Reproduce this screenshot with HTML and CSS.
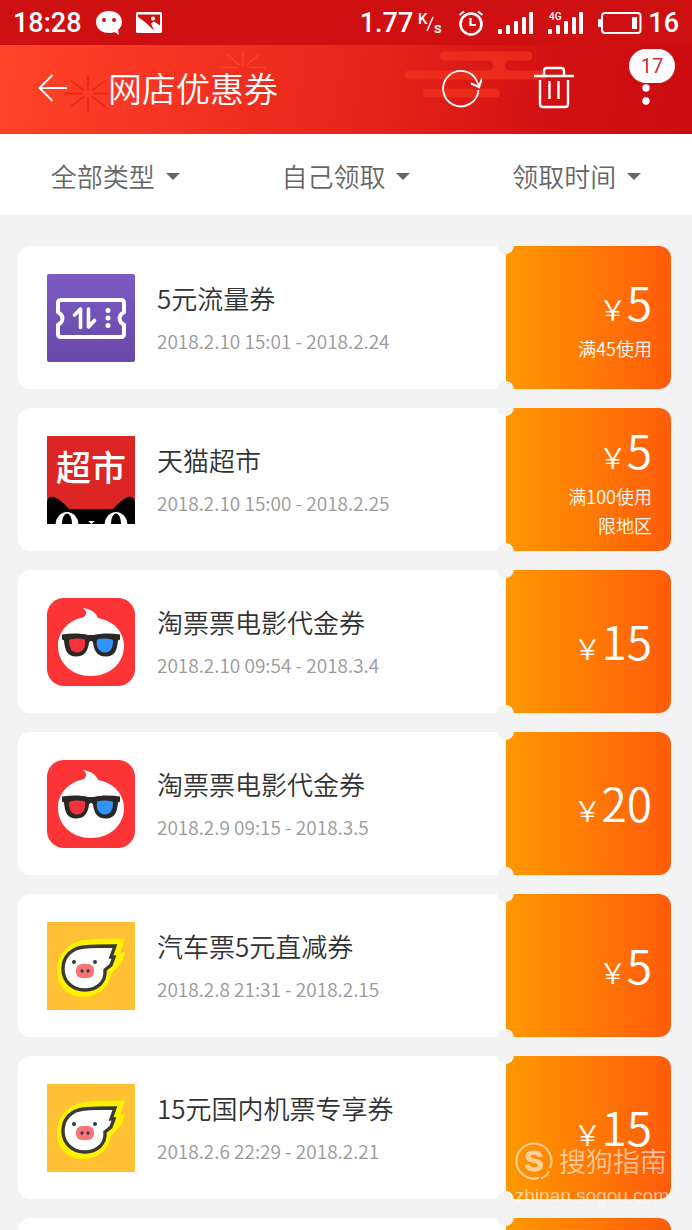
FILE: index.html
```html
<!DOCTYPE html>
<html lang="zh-CN">
<head>
  <meta charset="UTF-8" />
  <meta name="viewport" content="width=device-width, initial-scale=1.0" />
  <title>网店优惠券</title>
  <link rel="stylesheet" href="styles.css">
</head>
<body>
  <!-- shared logos -->
  <svg class="sprite" aria-hidden="true">
    <symbol id="logo-movie" viewBox="0 0 88 88">
      <rect width="88" height="88" rx="17" fill="#fd3436"/>
      <path d="M36 10c7 1 13 4 15 10 16 3 26 14 26 28 0 17-14 30-33 30S11 65 11 48c0-15 11-26 26-29 3-3 3-6-1-9z" fill="#fff"/>
      <path d="M15 36.500c9-1.500 19-1.500 26 .5h6c7-2 17-2 26-.5v5l-2 1c-1 11-4 16-12 16-9 0-12-6-13-14-1-2-3-2-4 0-1 8-4 14-13 14-8 0-11-5-12-16l-2-1z" fill="#2a2725"/>
      <path d="M22 42c5-2 11-2 16-.5 1 6-1 13-8 13-6 0-8-5-8-12.500z" fill="#f5323b"/>
      <path d="M66 42c-5-2-11-2-16-.5-1 6 1 13 8 13 6 0 8-5 8-12.500z" fill="#3193fb"/>
    </symbol>
    <symbol id="logo-pig" viewBox="0 0 88 88">
      <rect width="88" height="88" fill="#ffc033"/>
      <path d="M78 16.500L73 31l5-1-3 10-11 12c-2 14-14 23-28 23C20 75 10 64 10 49c0-15 9-26 23-30 11-3 29-2 45-2.500z" fill="#fff200"/>
      <path d="M68 24l-4 11h3l-3 8-6 5c1 12-8 20-20 20-13 0-22-9-22-21 0-13 9-21 21-22 11-1 21-1 31-1z" fill="#fff" stroke="#3a3935" stroke-width="3.400"/>
      <rect x="29" y="42" width="18" height="14" rx="6" fill="#fb7377"/>
      <circle cx="27" cy="40" r="2" fill="#3a3935"/>
      <circle cx="48" cy="40" r="2" fill="#3a3935"/>
      <circle cx="35" cy="49" r="1.700" fill="#3a3935"/>
      <circle cx="41" cy="49" r="1.700" fill="#3a3935"/>
    </symbol>
  </svg>

  <div class="app">
    <div class="status-bar">
      <div class="status-group">
        <span>18:28</span>
        <svg width="26" height="24" viewBox="0 0 26 24">
          <path d="M13 0C5.500 0 0 4.600 0 11s5.500 11 13 11c2 0 4-.3 5.500-1L23 24l-1-5c2.500-2 4-4.700 4-8 0-6.400-5.500-11-13-11z" fill="#fff"/>
          <circle cx="8" cy="9" r="2" fill="#cf1012"/>
          <circle cx="18" cy="9" r="2" fill="#cf1012"/>
        </svg>
        <svg width="26" height="21" viewBox="0 0 26 21">
          <rect width="26" height="21" rx="1.500" fill="#fff"/>
          <path d="M2 2.500h22v11l-6-4-3 2 3 7L9 10 2 5z" fill="#cf1012"/>
          <circle cx="17" cy="6.500" r="2" fill="#fff"/>
        </svg>
      </div>
      <div class="status-group">
        <span class="speed">1.77
          <svg width="26" height="30" viewBox="0 0 26 30" fill="#fff">
            <text x="0" y="16" class="unit">K</text>
            <path d="M9 23L15 9" stroke="#fff" stroke-width="1.500"/>
            <text x="16" y="25" class="unit">s</text>
          </svg>
        </span>
        <svg width="26" height="26" viewBox="0 0 26 26" fill="none" stroke="#fff" stroke-width="2.600">
          <circle cx="13" cy="14" r="10.500"/>
          <path d="M12.500 8v7H18M1.500 5L6 1.500M24.500 5L20 1.500" stroke-width="2.200"/>
        </svg>
        <svg width="36" height="24" viewBox="0 0 36 24" fill="#fff">
          <rect x="0" y="18" width="4" height="5" rx="1"/>
          <rect x="8" y="14" width="4" height="9" rx="1"/>
          <rect x="16" y="10" width="4" height="13" rx="1"/>
          <rect x="24" y="6" width="4" height="17" rx="1"/>
          <rect x="31" y="1" width="4" height="22" rx="1"/>
        </svg>
        <svg width="36" height="24" viewBox="0 0 36 24" fill="#fff">
          <text x="1" y="9" class="network">4G</text>
          <rect x="0" y="18" width="4" height="5" rx="1"/>
          <rect x="8" y="14" width="4" height="9" rx="1"/>
          <rect x="16" y="10" width="4" height="13" rx="1"/>
          <rect x="24" y="6" width="4" height="17" rx="1"/>
          <rect x="31" y="1" width="4" height="22" rx="1"/>
        </svg>
        <span class="battery">
          <svg width="44" height="22" viewBox="0 0 44 22">
            <rect x="4" y="1" width="38.500" height="20" rx="3" fill="none" stroke="#fff" stroke-width="2"/>
            <rect x="0" y="7" width="4" height="8" rx="1" fill="#fff"/>
            <rect x="34" y="5" width="5" height="12" fill="#fff"/>
          </svg>
          16
        </span>
      </div>
    </div>

    <header class="header">
      <svg class="header-art" viewBox="0 0 692 90" preserveAspectRatio="xMidYMid slice" aria-hidden="true">
        <g stroke="#d81d16" stroke-width="1.500" opacity=".7">
          <path d="M88 31v14M88 53v14M64 49h18M94 49h14M71 36l13 10M105 36L92 46M71 62l13-10M105 62L92 52"/>
        </g>
        <g stroke="#ff5132" stroke-width="1.500" opacity=".6">
          <path d="M243 6v16M227 10l13 11M259 10l-13 11M220 23h17M249 23h17"/>
        </g>
        <g fill="#f93b20" opacity=".55">
          <path d="M444 7h84a4.500 4.500 0 0 1 0 9h-18q-5 0-5 5t5 5h36v9H409a4.500 4.500 0 0 1 0-9h79q5 0 5-5t-5-5h-44a4.500 4.500 0 0 1 0-9z"/>
          <rect x="423" y="44" width="77" height="9" rx="4.500"/>
        </g>
      </svg>
      <button type="button" class="icon-btn back-btn" aria-label="返回">
        <svg width="30" height="30" viewBox="0 0 30 30" fill="none" stroke="#fff" stroke-width="1.800">
          <path d="M29 15H2M14.500 2L1.500 15l13 13"/>
        </svg>
      </button>
      <h1>网店优惠券</h1>
      <div class="actions">
        <button type="button" class="icon-btn" aria-label="刷新">
          <svg width="40" height="44" viewBox="0 0 40 44" fill="none" stroke="#fff" stroke-width="1.800">
            <path d="M36.500 24A17.700 17.700 0 1 1 34.800 15l1.700 4"/>
            <path d="M29 17.500l8 3.500 3-8.500" stroke-width="2.200"/>
          </svg>
        </button>
        <button type="button" class="icon-btn" aria-label="删除">
          <svg width="40" height="44" viewBox="0 0 40 44" fill="none" stroke="#fff" stroke-width="2.400">
            <path d="M0 10h40M10 9V5q0-3 3-3h14q3 0 3 3v4M6 14v24q0 3 3 3h22q3 0 3-3V14M15.500 15v18M24.500 15v18"/>
          </svg>
        </button>
        <button type="button" class="icon-btn" aria-label="更多">
          <svg width="40" height="44" viewBox="0 0 40 44" fill="#fff">
            <circle cx="20" cy="9" r="3.700"/>
            <circle cx="20" cy="22" r="3.700"/>
            <circle cx="20" cy="35" r="3.700"/>
          </svg>
          <span class="badge">17</span>
        </button>
      </div>
    </header>

    <form class="filters">
      <div class="filter">
        <select name="type" aria-label="类型"><option>全部类型</option></select>
      </div>
      <div class="filter">
        <select name="source" aria-label="来源"><option>自己领取</option></select>
      </div>
      <div class="filter">
        <select name="sort" aria-label="排序"><option>领取时间</option></select>
      </div>
    </form>

    <main class="list">
      <article class="coupon">
        <div class="info">
          <svg class="logo" viewBox="0 0 88 88">
            <defs>
              <linearGradient id="purple" x1="0" y1="0" x2="0" y2="1">
                <stop offset="0" stop-color="#7c5bc4"/>
                <stop offset="1" stop-color="#6848a8"/>
              </linearGradient>
            </defs>
            <rect width="88" height="88" rx="2" fill="url(#purple)"/>
            <path d="M14 26h60q3 0 3 3v9l-3 2.500q-3 4 0 8l3 2.500v9q0 3-3 3H14q-3 0-3-3v-9l3-2.500q3-4 0-8L11 38v-9q0-3 3-3z" fill="none" stroke="#fff" stroke-width="4"/>
            <path d="M27.500 41l6-6v18.500M41.500 35v18l6-6.500" fill="none" stroke="#fff" stroke-width="3.600" stroke-linecap="round" stroke-linejoin="round"/>
            <circle cx="61" cy="36.500" r="2.500" fill="#fff"/>
            <circle cx="61" cy="44" r="2.500" fill="#fff"/>
            <circle cx="61" cy="51.500" r="2.500" fill="#fff"/>
          </svg>
          <div class="text">
            <h2>5元流量券</h2>
            <p>2018.2.10 15:01 - 2018.2.24</p>
          </div>
        </div>
        <div class="value">
          <div class="price"><span>￥</span>5</div>
          <p>满45使用</p>
        </div>
      </article>

      <article class="coupon">
        <div class="info">
          <svg class="logo" viewBox="0 0 88 88">
            <rect width="88" height="88" fill="#dc2626"/>
            <text x="44" y="45" class="market">超市</text>
            <path d="M0 88V66q1-6 7-5 6 2 15 12h44q9-10 15-12 6-1 7 5v22z" fill="#000"/>
            <ellipse cx="20" cy="89" rx="11.500" ry="13" fill="#fff"/>
            <ellipse cx="69" cy="89" rx="11.500" ry="13" fill="#fff"/>
            <ellipse cx="20" cy="88" rx="5" ry="10.500" fill="#000"/>
            <ellipse cx="69" cy="88" rx="5" ry="10.500" fill="#000"/>
            <path d="M41 85h7l-3.500 3z" fill="#fff"/>
          </svg>
          <div class="text">
            <h2>天猫超市</h2>
            <p>2018.2.10 15:00 - 2018.2.25</p>
          </div>
        </div>
        <div class="value">
          <div class="price"><span>￥</span>5</div>
          <p>满100使用</p>
          <p>限地区</p>
        </div>
      </article>

      <article class="coupon">
        <div class="info">
          <svg class="logo"><use href="#logo-movie"/></svg>
          <div class="text">
            <h2>淘票票电影代金券</h2>
            <p>2018.2.10 09:54 - 2018.3.4</p>
          </div>
        </div>
        <div class="value">
          <div class="price"><span>￥</span>15</div>
        </div>
      </article>

      <article class="coupon">
        <div class="info">
          <svg class="logo"><use href="#logo-movie"/></svg>
          <div class="text">
            <h2>淘票票电影代金券</h2>
            <p>2018.2.9 09:15 - 2018.3.5</p>
          </div>
        </div>
        <div class="value">
          <div class="price"><span>￥</span>20</div>
        </div>
      </article>

      <article class="coupon">
        <div class="info">
          <svg class="logo"><use href="#logo-pig"/></svg>
          <div class="text">
            <h2>汽车票5元直减券</h2>
            <p>2018.2.8 21:31 - 2018.2.15</p>
          </div>
        </div>
        <div class="value">
          <div class="price"><span>￥</span>5</div>
        </div>
      </article>

      <article class="coupon">
        <div class="info">
          <svg class="logo"><use href="#logo-pig"/></svg>
          <div class="text">
            <h2>15元国内机票专享券</h2>
            <p>2018.2.6 22:29 - 2018.2.21</p>
          </div>
        </div>
        <div class="value">
          <div class="price"><span>￥</span>15</div>
        </div>
      </article>

      <article class="coupon">
        <div class="info"></div>
        <div class="value"></div>
      </article>
    </main>
  </div>

  <div class="watermark">
    <div class="watermark-brand">
      <svg width="38" height="38" viewBox="0 0 38 38" fill="none" stroke="#fff" stroke-width="2">
        <path d="M24 35.800A17.500 17.500 0 1 1 35 26M26 36q6-1 8-7"/>
        <text x="19" y="29" class="watermark-s">S</text>
      </svg>
      <span>搜狗指南</span>
    </div>
    <div class="watermark-url">zhinan.sogou.com</div>
  </div>
</body>
</html>
```
FILE: styles.css
```css
* {
  box-sizing: border-box;
}

body {
  margin: 0;
  font-family: "Noto Sans CJK SC", sans-serif;
  font-weight: 350;
  background-color: #f3f3f3;
  color: #333;
}

h1, h2, p {
  margin: 0;
  font-weight: inherit;
}

svg {
  display: block;
  flex-shrink: 0;
}

.sprite {
  position: absolute;
  width: 0;
  height: 0;
}

.app {
  display: flex;
  flex-direction: column;
  height: 100vh;
}

/* status bar */
.status-bar {
  display: flex;
  flex-shrink: 0;
  justify-content: space-between;
  align-items: center;
  height: 45px;
  padding: 0 13px;
  background-color: #cf1012;
  color: white;
  font-family: Roboto, sans-serif;
  font-size: 27px;
  font-weight: 500;
}

.status-group {
  display: flex;
  align-items: center;
  gap: 14px;
}

.speed,
.battery {
  display: flex;
  align-items: center;
  gap: 6px;
}

.speed {
  gap: 5px;
}

.unit {
  font-size: 15px;
}

.network {
  font-size: 10px;
}

/* header */
.header {
  position: relative;
  display: flex;
  flex-shrink: 0;
  align-items: center;
  height: 89px;
  padding: 0 26px 3px 38px;
  background: linear-gradient(100deg, #ff4329 0%, #f63423 25%, #e42319 55%, #d21013 80%, #cb0b10 100%);
}

.header-art {
  position: absolute;
  top: 0;
  left: 0;
  width: 100%;
  height: 100%;
}

.icon-btn {
  position: relative;
  padding: 0;
  border: none;
  background: none;
  cursor: pointer;
}

.header h1 {
  position: relative;
  margin-left: 40px;
  color: white;
  font-size: 34px;
  line-height: 48px;
}

.actions {
  display: flex;
  gap: 52px;
  margin-left: auto;
}

.badge {
  position: absolute;
  top: -17px;
  left: 3px;
  width: 46px;
  border-radius: 17px;
  background-color: white;
  color: #c8303c;
  font-family: Roboto, sans-serif;
  font-size: 20px;
  line-height: 34px;
  text-align: center;
}

/* filters */
.filters {
  display: grid;
  grid-template-columns: repeat(3, 1fr);
  flex-shrink: 0;
  height: 81px;
  background-color: white;
}

.filter {
  display: flex;
  justify-content: center;
  align-items: center;
  gap: 10px;
  padding-top: 3px;
}

.filter select {
  appearance: none;
  padding: 0;
  border: none;
  background: none;
  color: #666;
  font-family: inherit;
  font-size: 26px;
  font-weight: inherit;
  line-height: 38px;
  cursor: pointer;
}

.filter::after {
  content: "";
  border: 7px solid transparent;
  border-top-color: #666;
  border-bottom: none;
}

/* coupons */
.list {
  display: flex;
  flex: 1;
  flex-direction: column;
  gap: 19px;
  min-height: 0;
  padding: 31px 21px 19px 18px;
  overflow-y: auto;
  scrollbar-width: none;
}

.coupon {
  display: flex;
  flex-shrink: 0;
  min-height: 143px;
}

.info {
  display: flex;
  flex: 1;
  align-items: center;
  gap: 22px;
  padding-left: 29px;
  border-radius: 12px 0 0 12px;
  background-color: white;
}

.logo {
  width: 88px;
  height: 88px;
}

.market {
  fill: white;
  font-size: 35px;
  font-weight: 500;
  text-anchor: middle;
}

.text {
  padding-bottom: 2px;
}

.text h2 {
  margin-bottom: 12px;
  font-size: 26px;
  line-height: 36px;
}

.text p {
  color: #999;
  font-size: 19px;
  line-height: 26px;
}

.value {
  position: relative;
  display: flex;
  flex-direction: column;
  justify-content: center;
  width: 165px;
  padding: 4px 19px 0 0;
  border-radius: 0 12px 12px 0;
  background: linear-gradient(to right, #ff9800, #ff5c0a);
  color: white;
  text-align: right;
}

/* ticket notches */
.value::before,
.value::after {
  content: "";
  position: absolute;
  left: -9px;
  width: 17px;
  height: 17px;
  border-radius: 50%;
  background-color: #f3f3f3;
}

.value::before {
  top: -9px;
}

.value::after {
  bottom: -9px;
}

.price {
  font-size: 46px;
  line-height: 50px;
}

.price span {
  font-size: 28px;
}

.value p {
  font-size: 18px;
  line-height: 29px;
}

/* watermark */
.watermark {
  position: fixed;
  right: 23px;
  bottom: 22px;
  color: white;
  opacity: 0.6;
}

.watermark-brand {
  display: flex;
  align-items: center;
  gap: 6px;
  margin-bottom: 4px;
  font-size: 27px;
  line-height: 36px;
}

.watermark-s {
  fill: white;
  stroke-width: 1px;
  font-family: "Liberation Sans", sans-serif;
  font-size: 29px;
  font-weight: bold;
  text-anchor: middle;
}

.watermark-url {
  font-family: "Liberation Sans", sans-serif;
  font-size: 19px;
  line-height: 24px;
}
```
